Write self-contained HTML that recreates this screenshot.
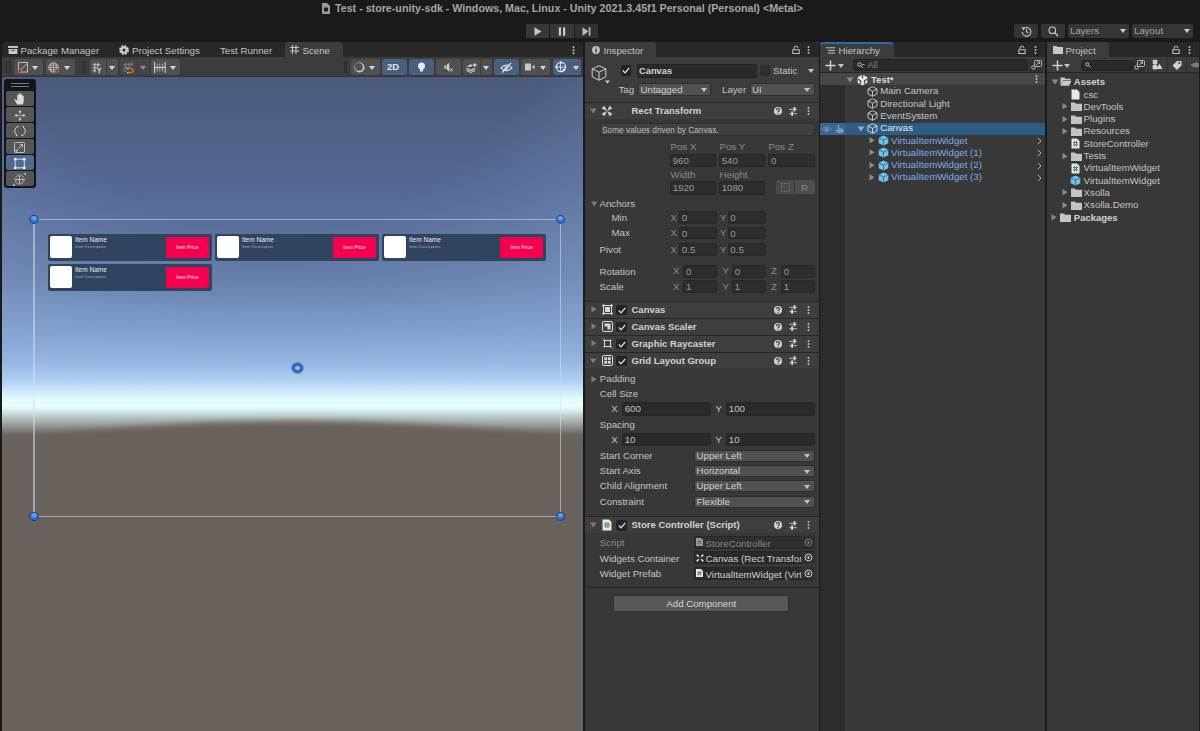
<!DOCTYPE html>
<html><head><meta charset="utf-8">
<style>
*{box-sizing:border-box;margin:0;padding:0}
html,body{width:1200px;height:731px;overflow:hidden;background:#1a1a1a;font-family:"Liberation Sans",sans-serif;color:#c4c4c4}
.a{position:absolute}
.t{position:absolute;white-space:nowrap;font-size:9.7px;line-height:12px;height:12px}
.b{font-weight:bold}
svg{position:absolute;overflow:visible}
.fld{position:absolute;background:#2a2a2a;border:1px solid #232323;border-radius:2px}
.pop{position:absolute;background:#515151;border:1px solid #2e2e2e;border-radius:2px}
.arr{position:absolute;width:0;height:0;border-left:3.5px solid transparent;border-right:3.5px solid transparent;border-top:4px solid #c4c4c4}
.hdr{position:absolute;left:587px;width:232px;height:16px;background:#3e3e3e;border-top:1px solid #262626}
.chk{position:absolute;width:11px;height:11px;background:#232323;border-radius:2px}
</style></head><body>

<!-- title -->
<div class="t b" style="left:335px;top:2px;font-size:10.7px;color:#a6a6a6">Test - store-unity-sdk - Windows, Mac, Linux - Unity 2021.3.45f1 Personal (Personal) &lt;Metal&gt;</div>
<svg style="left:321px;top:2px" width="10" height="13" viewBox="0 0 10 13"><path d="M1 1h5l3 3v8H1z" fill="#9a9a9a"/><circle cx="5" cy="7.5" r="2.2" fill="#1a1a1a"/></svg>

<!-- play buttons -->
<div class="a" style="left:526px;top:24px;width:23px;height:14px;background:#383838"></div>
<div class="a" style="left:550px;top:24px;width:24px;height:14px;background:#383838"></div>
<div class="a" style="left:575px;top:24px;width:23px;height:14px;background:#313131"></div>
<svg style="left:533.5px;top:26.5px" width="9" height="9"><path d="M0.5 0.3L7.5 4.5L0.5 8.7z" fill="#c8c8c8"/></svg>
<svg style="left:558px;top:26.5px" width="8" height="9"><rect x="0.8" y="0.3" width="2.2" height="8.4" fill="#c8c8c8"/><rect x="5" y="0.3" width="2.2" height="8.4" fill="#c8c8c8"/></svg>
<svg style="left:582px;top:26.5px" width="9" height="9"><path d="M0.5 0.3L6.5 4.5L0.5 8.7z" fill="#bcbcbc"/><rect x="6.8" y="0.3" width="1.6" height="8.4" fill="#bcbcbc"/></svg>

<!-- right toolbar -->
<div class="a" style="left:1014px;top:24px;width:24px;height:14px;background:#353535;border-radius:2px"></div>
<div class="a" style="left:1041px;top:24px;width:24px;height:14px;background:#353535;border-radius:2px"></div>
<div class="a" style="left:1068px;top:24px;width:61px;height:14px;background:#353535;border-radius:2px"></div>
<div class="a" style="left:1132px;top:24px;width:61px;height:14px;background:#353535;border-radius:2px"></div>
<svg style="left:1020.5px;top:25.5px" width="11" height="11" viewBox="0 0 11 11"><path d="M2.2 3.2A4.3 4.3 0 1 1 1.3 6" fill="none" stroke="#c8c8c8" stroke-width="1.1"/><path d="M0.3 1.6L3.6 1.2L3 4.5z" fill="#c8c8c8"/><path d="M5.5 3.2v2.6l1.8 1.2" fill="none" stroke="#c8c8c8" stroke-width="1.1"/></svg>
<svg style="left:1047.5px;top:25.5px" width="11" height="11" viewBox="0 0 11 11"><circle cx="4.3" cy="4.3" r="3.3" fill="none" stroke="#c8c8c8" stroke-width="1.1"/><path d="M6.7 6.7L10 10" stroke="#c8c8c8" stroke-width="1.4"/></svg>
<div class="t" style="left:1070px;top:25px;color:#a8a8a8">Layers</div>
<div class="t" style="left:1134px;top:25px;color:#a8a8a8">Layout</div>
<div class="arr" style="left:1120px;top:29px;border-top-color:#d0d0d0"></div>
<div class="arr" style="left:1184px;top:29px;border-top-color:#d0d0d0"></div>


<!-- ============ SCENE PANEL ============ -->
<div class="a" style="left:2px;top:42px;width:582px;height:15px;background:#282828;border-radius:4px 4px 0 0"></div>
<div class="a" style="left:285px;top:42px;width:58px;height:15px;background:#3c3c3c;border-radius:3px 3px 0 0"></div>
<svg style="left:7.5px;top:46px" width="10" height="8" viewBox="0 0 10 8"><rect x="0" y="0" width="10" height="1.9" fill="#c8c8c8"/><rect x="0.6" y="3" width="8.8" height="5" fill="#c8c8c8"/><rect x="3.2" y="4.2" width="3.6" height="0.9" rx="0.4" fill="#282828"/></svg>
<div class="t" style="left:20.5px;top:44.5px;color:#c4c4c4">Package Manager</div>
<svg style="left:118.8px;top:45.2px" width="10" height="10" viewBox="0 0 10 10"><circle cx="5" cy="5" r="3.9" fill="none" stroke="#d0d0d0" stroke-width="2" stroke-dasharray="2 1.06"/><circle cx="5" cy="5" r="2.6" fill="none" stroke="#d0d0d0" stroke-width="2"/></svg>
<div class="t" style="left:132px;top:44.5px;color:#c4c4c4">Project Settings</div>
<div class="t" style="left:220px;top:44.5px;color:#c4c4c4">Test Runner</div>
<svg style="left:290px;top:45px" width="9" height="9" viewBox="0 0 9 9"><path d="M2.5 0v9M6 0v9M0 2.5h9M0 6h9" stroke="#c4c4c4" stroke-width="1.1"/></svg>
<div class="t" style="left:302.5px;top:44.5px;color:#c4c4c4">Scene</div>
<svg style="left:572px;top:46px" width="3" height="9"><circle cx="1.5" cy="1.2" r="1" fill="#c4c4c4"/><circle cx="1.5" cy="4.2" r="1" fill="#c4c4c4"/><circle cx="1.5" cy="7.2" r="1" fill="#c4c4c4"/></svg>

<!-- scene toolbar -->
<div class="a" style="left:2px;top:57px;width:582px;height:20px;background:#3c3c3c;border-bottom:1px solid #363636"></div>
<div class="a" style="left:6px;top:61px;width:1px;height:12px;background:#2a2a2a"></div>
<div class="a" style="left:8.5px;top:61px;width:1px;height:12px;background:#2a2a2a"></div>
<div class="a" style="left:81.5px;top:61px;width:1px;height:12px;background:#2a2a2a"></div>
<div class="a" style="left:84px;top:61px;width:1px;height:12px;background:#2a2a2a"></div>
<div class="a" style="left:343.5px;top:61px;width:1px;height:12px;background:#2a2a2a"></div>
<div class="a" style="left:346px;top:61px;width:1px;height:12px;background:#2a2a2a"></div>

<div class="a" style="left:14px;top:59px;width:29px;height:16px;background:#505050;border-radius:2px"></div>
<div class="a" style="left:46px;top:59px;width:29px;height:16px;background:#505050;border-radius:2px"></div>
<div class="a" style="left:89.5px;top:59px;width:16.5px;height:16px;background:#505050;border-radius:2px 0 0 2px"></div>
<div class="a" style="left:106.5px;top:59px;width:11.5px;height:16px;background:#505050;border-radius:0 2px 2px 0"></div>
<div class="a" style="left:120px;top:59px;width:17px;height:16px;background:#464646;border-radius:2px 0 0 2px"></div>
<div class="a" style="left:137.5px;top:59px;width:11px;height:16px;background:#464646;border-radius:0 2px 2px 0"></div>
<div class="a" style="left:151px;top:59px;width:29px;height:16px;background:#505050;border-radius:2px"></div>
<!-- icons -->
<svg style="left:17px;top:62px" width="12" height="11" viewBox="0 0 12 11"><rect x="1.5" y="0.5" width="9" height="9.5" fill="none" stroke="#c8c8c8" stroke-width="0.9"/><path d="M3 8.5L10 1.5" stroke="#c8c8c8" stroke-width="0.9"/><circle cx="2.7" cy="9" r="1.6" fill="#4b4b4b" stroke="#e06030" stroke-width="1"/></svg>
<div class="arr" style="left:32px;top:65.5px;border-top-color:#d8d8d8"></div>
<svg style="left:48px;top:62px" width="12" height="11" viewBox="0 0 12 11"><circle cx="5.5" cy="5.5" r="4.7" fill="none" stroke="#c8c8c8" stroke-width="0.9"/><path d="M5.5 0.8v9.4M0.8 5.5h9.4M1.5 3.2h8M1.5 7.8h8M3.3 1.2q-1.5 4.3 0 8.6M7.7 1.2q1.5 4.3 0 8.6" fill="none" stroke="#c8c8c8" stroke-width="0.7"/><circle cx="9" cy="8.6" r="1.6" fill="#4b4b4b" stroke="#e06030" stroke-width="1"/></svg>
<div class="arr" style="left:64px;top:65.5px;border-top-color:#d8d8d8"></div>
<svg style="left:92px;top:61.5px" width="11" height="12" viewBox="0 0 11 12"><path d="M2.8 0.5v10M6 0.5v5M0.5 2.8h8M0.5 5.8h4.5M0.5 8.8h3.5" stroke="#d4d4d4" stroke-width="0.9" fill="none"/><path d="M5.2 5.8l2 2.6 2-2.6M7.2 8.4v3.2" stroke="#dadada" stroke-width="1.1" fill="none"/></svg>
<div class="arr" style="left:109px;top:65.5px;border-top-color:#d8d8d8"></div>
<svg style="left:123px;top:61.5px" width="12" height="12" viewBox="0 0 12 12"><path d="M2.8 0.5v10M6 0.5v5M9 0.5v3M0.5 2.8h10M0.5 5.8h5M0.5 8.8h2" stroke="#b8b8b8" stroke-width="0.8" stroke-dasharray="1.2 0.8" fill="none"/><path d="M5.5 6.6h2.6a2 2 0 0 1 0 4H5.5" stroke="#e0642c" stroke-width="1.5" fill="none"/><rect x="4" y="5.9" width="1.6" height="1.4" fill="#c0c0c0"/><rect x="4" y="9.9" width="1.6" height="1.4" fill="#c0c0c0"/></svg>
<div class="arr" style="left:140px;top:65.5px;border-top-color:#8e8e8e"></div>
<svg style="left:153.5px;top:61.5px" width="12" height="11" viewBox="0 0 12 11"><path d="M0.6 0v11M11.2 0v11M0.6 5.5h10.6" stroke="#d8d8d8" stroke-width="1" fill="none"/><path d="M3.2 1.5v8M5.8 1.5v8M8.5 1.5v8" stroke="#c4c4c4" stroke-width="0.8" fill="none"/></svg>
<div class="arr" style="left:170px;top:65.5px;border-top-color:#d8d8d8"></div>

<!-- right side toolbar -->
<div class="a" style="left:351px;top:59px;width:29px;height:16px;background:#505050;border-radius:2px"></div>
<svg style="left:353.5px;top:61.5px" width="11" height="11" viewBox="0 0 11 11"><circle cx="5.5" cy="5.5" r="5" fill="#d4d4d4"/><circle cx="5.5" cy="5.5" r="4" fill="#505050"/><circle cx="5.5" cy="5.5" r="4.4" fill="#d4d4d4"/><circle cx="4.9" cy="4.9" r="3.9" fill="#505050"/></svg>
<div class="arr" style="left:369px;top:65.5px;border-top-color:#d8d8d8"></div>
<div class="a" style="left:382px;top:59px;width:25px;height:16px;background:#46607e;border-radius:2px"></div>
<div class="t b" style="left:387px;top:61px;color:#e8e8e8;font-size:9.5px">2D</div>
<div class="a" style="left:409px;top:59px;width:25px;height:16px;background:#46607e;border-radius:2px"></div>
<svg style="left:417px;top:61.5px" width="9" height="11" viewBox="0 0 9 11"><circle cx="4.5" cy="4" r="3.5" fill="#e8e8e8"/><rect x="3" y="6" width="3" height="3.5" fill="#e8e8e8"/></svg>
<div class="a" style="left:436px;top:59px;width:25px;height:16px;background:#505050;border-radius:2px"></div>
<svg style="left:444px;top:62px" width="11" height="11" viewBox="0 0 11 11"><rect x="0.3" y="3.3" width="1.3" height="3.6" fill="#cfcfcf"/><path d="M2.4 3.3L5.2 0.8V9.4L2.4 6.9z" fill="#cfcfcf"/><path d="M5.8 6.3l3 3M8.8 6.3l-3 3" stroke="#cfcfcf" stroke-width="1"/></svg>
<div class="a" style="left:463px;top:59px;width:17px;height:16px;background:#505050;border-radius:2px 0 0 2px"></div>
<div class="a" style="left:480.5px;top:59px;width:11.5px;height:16px;background:#505050;border-radius:0 2px 2px 0"></div>
<svg style="left:466px;top:61.5px" width="12" height="11" viewBox="0 0 12 11"><path d="M0.5 5.5l4.3 2.2 4.3-2.2v1.6l-4.3 2.2-4.3-2.2z" fill="#cfcfcf"/><path d="M0.5 7.8l4.3 2.2 4.3-2.2v1.2l-4.3 2-4.3-2z" fill="#cfcfcf"/><path d="M0.5 4.2l4.3-2 2 1-2.2 1.8z" fill="#cfcfcf"/><path d="M8.8 0.5l0.7 1.8 1.8 0.7-1.8 0.7-0.7 1.8-0.7-1.8-1.8-0.7 1.8-0.7z" fill="#e0e0e0"/></svg>
<div class="arr" style="left:482.5px;top:65.5px;border-top-color:#d8d8d8"></div>
<div class="a" style="left:494px;top:59px;width:25px;height:16px;background:#46607e;border-radius:2px"></div>
<svg style="left:500px;top:61.5px" width="13" height="11" viewBox="0 0 13 11"><path d="M1 5.8q5.5-5.5 11 0q-5.5 5.5-11 0z" fill="none" stroke="#e8e8e8" stroke-width="1.1"/><circle cx="6.5" cy="5.8" r="1.6" fill="none" stroke="#e8e8e8" stroke-width="0.9"/><path d="M2.2 10.5L11 1" stroke="#e8e8e8" stroke-width="1.2"/></svg>
<div class="a" style="left:521px;top:59px;width:29px;height:16px;background:#505050;border-radius:2px"></div>
<svg style="left:525px;top:63px" width="11" height="8" viewBox="0 0 11 8"><rect x="0" y="0.5" width="6" height="7" fill="#c8c8c8"/><path d="M7.5 3.5l2-2v5l-2-2z" fill="#c8c8c8"/></svg>
<div class="arr" style="left:540px;top:65.5px;border-top-color:#d8d8d8"></div>
<div class="a" style="left:553px;top:59px;width:16.5px;height:16px;background:#46607e;border-radius:2px 0 0 2px"></div>
<div class="a" style="left:570px;top:59px;width:11px;height:16px;background:#46607e;border-radius:0 2px 2px 0"></div>
<svg style="left:555px;top:61px" width="12" height="12" viewBox="0 0 12 12"><circle cx="6" cy="6" r="4.6" fill="none" stroke="#ececec" stroke-width="1.1"/><path d="M1.4 5.5q4.6 2 9.2 0M6.2 1.4q-2 4.6 0 9.2" fill="none" stroke="#ececec" stroke-width="0.9"/><circle cx="6" cy="1.4" r="1.2" fill="#ececec"/><circle cx="1.4" cy="6" r="1.2" fill="#ececec"/><circle cx="9" cy="8.8" r="1.2" fill="#ececec"/></svg>
<div class="arr" style="left:572.5px;top:65.5px;border-top-color:#d8d8d8"></div>

<!-- scene view -->
<div class="a" style="left:2px;top:77px;width:581.2px;height:654px;overflow:hidden;background:linear-gradient(180deg,#4a5a7b 0px,#546893 110px,#627aa6 200px,#6c86b2 223px,#7d9bc8 253px,#94b4e0 283px,#b0d0f2 303px,#d0ecfc 315px,#e4fcff 323px,#e8ffff 328px,#dcf0f0 333px,#bccccc 339px,#a0a8a8 346px,#848482 352px,#6b6560 358px,#69625c 654px)">
<div class="a" style="left:0;top:0;width:582px;height:320px;background:radial-gradient(ellipse 500px 700px at 270px -350px,rgba(160,190,235,0) 72%,rgba(160,190,235,0.12) 85%,rgba(160,190,235,0.3) 102%);-webkit-mask-image:linear-gradient(180deg,#000 0,#000 230px,transparent 320px)"></div>
<div class="a" style="left:-905px;top:344px;width:2400px;height:1300px;border-radius:50%;background:#69625c;filter:blur(3px)"></div>
</div>
<!-- canvas rect -->
<div class="a" style="left:34px;top:219px;width:527px;height:1.3px;background:rgba(215,222,235,0.55)"></div>
<div class="a" style="left:34px;top:515.8px;width:527px;height:1.3px;background:rgba(215,222,235,0.55)"></div>
<div class="a" style="left:33.4px;top:220px;width:1.3px;height:296px;background:rgba(215,222,235,0.55)"></div>
<div class="a" style="left:560px;top:220px;width:1.3px;height:296px;background:rgba(215,222,235,0.55)"></div>
<div class="a" style="left:30.3px;top:216.1px;width:7.4px;height:7.4px;border-radius:50%;background:radial-gradient(circle at 50% 30%,#7ab8ff 0,#1a6ae8 60%,#2a5ab0 100%);box-shadow:0 0 0 0.9px rgba(30,40,60,0.7)"></div>
<div class="a" style="left:557px;top:216.1px;width:7.4px;height:7.4px;border-radius:50%;background:radial-gradient(circle at 50% 30%,#7ab8ff 0,#1a6ae8 60%,#2a5ab0 100%);box-shadow:0 0 0 0.9px rgba(30,40,60,0.7)"></div>
<div class="a" style="left:30.3px;top:512.7px;width:7.4px;height:7.4px;border-radius:50%;background:radial-gradient(circle at 50% 30%,#7ab8ff 0,#1a6ae8 60%,#2a5ab0 100%);box-shadow:0 0 0 0.9px rgba(30,40,60,0.7)"></div>
<div class="a" style="left:557px;top:512.7px;width:7.4px;height:7.4px;border-radius:50%;background:radial-gradient(circle at 50% 30%,#7ab8ff 0,#1a6ae8 60%,#2a5ab0 100%);box-shadow:0 0 0 0.9px rgba(30,40,60,0.7)"></div>
<div class="a" style="left:292.2px;top:362.6px;width:10.8px;height:10.8px;border-radius:50%;border:3px solid #2a68cc;box-shadow:0 0 0 0.8px rgba(40,60,100,0.5)"></div>

<!-- widgets -->
<div class="a" style="left:48px;top:234px;width:164px;height:27px;background:#30435f;border-radius:2px"></div>
<div class="a" style="left:50px;top:236px;width:22px;height:22px;background:#fff;border-radius:2px"></div>
<div class="a" style="left:75px;top:235.5px;font-size:6.5px;line-height:8px;color:#e8ecf2;white-space:nowrap">Item Name</div>
<div class="a" style="left:75px;top:244px;font-size:4.3px;line-height:6px;color:#9eaabb;white-space:nowrap">Item Description</div>
<div class="a" style="left:166px;top:237px;width:43px;height:21px;background:#f5004f;border-radius:1px"></div>
<div class="a" style="left:166px;top:244px;width:43px;font-size:5px;line-height:7px;color:#ffe0ea;text-align:center;white-space:nowrap">Item Price</div>
<div class="a" style="left:215px;top:234px;width:164px;height:27px;background:#30435f;border-radius:2px"></div>
<div class="a" style="left:217px;top:236px;width:22px;height:22px;background:#fff;border-radius:2px"></div>
<div class="a" style="left:242px;top:235.5px;font-size:6.5px;line-height:8px;color:#e8ecf2;white-space:nowrap">Item Name</div>
<div class="a" style="left:242px;top:244px;font-size:4.3px;line-height:6px;color:#9eaabb;white-space:nowrap">Item Description</div>
<div class="a" style="left:333px;top:237px;width:43px;height:21px;background:#f5004f;border-radius:1px"></div>
<div class="a" style="left:333px;top:244px;width:43px;font-size:5px;line-height:7px;color:#ffe0ea;text-align:center;white-space:nowrap">Item Price</div>
<div class="a" style="left:382px;top:234px;width:164px;height:27px;background:#30435f;border-radius:2px"></div>
<div class="a" style="left:384px;top:236px;width:22px;height:22px;background:#fff;border-radius:2px"></div>
<div class="a" style="left:409px;top:235.5px;font-size:6.5px;line-height:8px;color:#e8ecf2;white-space:nowrap">Item Name</div>
<div class="a" style="left:409px;top:244px;font-size:4.3px;line-height:6px;color:#9eaabb;white-space:nowrap">Item Description</div>
<div class="a" style="left:500px;top:237px;width:43px;height:21px;background:#f5004f;border-radius:1px"></div>
<div class="a" style="left:500px;top:244px;width:43px;font-size:5px;line-height:7px;color:#ffe0ea;text-align:center;white-space:nowrap">Item Price</div>
<div class="a" style="left:48px;top:264px;width:164px;height:27px;background:#30435f;border-radius:2px"></div>
<div class="a" style="left:50px;top:266px;width:22px;height:22px;background:#fff;border-radius:2px"></div>
<div class="a" style="left:75px;top:265.5px;font-size:6.5px;line-height:8px;color:#e8ecf2;white-space:nowrap">Item Name</div>
<div class="a" style="left:75px;top:274px;font-size:4.3px;line-height:6px;color:#9eaabb;white-space:nowrap">Item Description</div>
<div class="a" style="left:166px;top:267px;width:43px;height:21px;background:#f5004f;border-radius:1px"></div>
<div class="a" style="left:166px;top:274px;width:43px;font-size:5px;line-height:7px;color:#ffe0ea;text-align:center;white-space:nowrap">Item Price</div>

<!-- tool palette -->
<div class="a" style="left:3.5px;top:79px;width:32.5px;height:109px;background:#11151c;border-radius:3px"></div>
<div class="a" style="left:11px;top:83px;width:18px;height:1px;background:#7a7e84"></div>
<div class="a" style="left:11px;top:85.5px;width:18px;height:1px;background:#7a7e84"></div>
<div class="a" style="left:5.5px;top:91px;width:28.5px;height:15px;background:#565656;border-radius:2px"></div>
<div class="a" style="left:5.5px;top:107px;width:28.5px;height:15px;background:#565656;border-radius:2px"></div>
<div class="a" style="left:5.5px;top:123px;width:28.5px;height:15px;background:#565656;border-radius:2px"></div>
<div class="a" style="left:5.5px;top:139px;width:28.5px;height:15px;background:#565656;border-radius:2px"></div>
<div class="a" style="left:5.5px;top:155px;width:28.5px;height:15px;background:#4e6a8f;border-radius:2px"></div>
<div class="a" style="left:5.5px;top:171px;width:28.5px;height:15px;background:#565656;border-radius:2px"></div>

<svg style="left:13.5px;top:92.5px" width="12" height="12" viewBox="0 0 12 12"><path d="M3.2 11.5L0.8 7.6q-0.6-1 0.3-1.3q0.7-0.2 1.2 0.5l1 1.3V2.5q0-0.9 0.8-0.9t0.8 0.9v3.8V1.2q0-0.9 0.8-0.9t0.8 0.9v5.1V1.8q0-0.9 0.8-0.9t0.8 0.9v4.5V3.3q0-0.9 0.8-0.9t0.8 0.9v4.9q0 2.2-1.3 3.3z" fill="#dcdcdc"/></svg>
<svg style="left:13.5px;top:108.5px" width="12" height="13" viewBox="0 0 12 13"><path d="M6 1.5v10M1 6.5h10" stroke="#d0d0d0" stroke-width="0.9" fill="none"/><path d="M4.3 3.2L6 1.2L7.7 3.2z M4.3 9.8L6 11.8L7.7 9.8z M2.7 4.8L0.7 6.5L2.7 8.2z M9.3 4.8L11.3 6.5L9.3 8.2z" fill="#d0d0d0"/><rect x="5" y="5.5" width="2" height="2" fill="#565656"/></svg>
<svg style="left:13.5px;top:124.8px" width="12" height="12" viewBox="0 0 12 12"><path d="M5 1.2A4.8 4.8 0 0 0 2.2 9.5M7 10.8A4.8 4.8 0 0 0 9.8 2.5" stroke="#d0d0d0" stroke-width="1" fill="none"/><path d="M8.2 0.6L10.3 1.4L9.7 3.6z M3.8 11.4L1.7 10.6L2.3 8.4z" fill="#d0d0d0"/></svg>
<svg style="left:14px;top:142px" width="11" height="11" viewBox="0 0 11 11"><rect x="0.5" y="0.5" width="10" height="10" rx="0.8" fill="none" stroke="#c8c8c8" stroke-width="0.9"/><rect x="1.5" y="7.6" width="2" height="2" fill="#c8c8c8"/><path d="M3.8 7.2L8.3 2.7M5.6 2.6h2.8v2.8" stroke="#c8c8c8" stroke-width="0.9" fill="none"/></svg>
<svg style="left:14px;top:158px" width="11.5" height="11" viewBox="0 0 11.5 11"><path d="M1.2 2.5v6M10.3 2.5v6M2.5 1.2h6.5M2.5 9.8h6.5" stroke="#e8e8e8" stroke-width="0.9"/><rect x="0" y="0" width="2.5" height="2.5" fill="#f4f4f4"/><rect x="9" y="0" width="2.5" height="2.5" fill="#f4f4f4"/><rect x="0" y="8.5" width="2.5" height="2.5" fill="#f4f4f4"/><rect x="9" y="8.5" width="2.5" height="2.5" fill="#f4f4f4"/></svg>
<svg style="left:13px;top:173px" width="13" height="13" viewBox="0 0 13 13"><circle cx="6.5" cy="6.5" r="4.6" fill="none" stroke="#cfcfcf" stroke-width="0.9" stroke-dasharray="2.4 0.9"/><path d="M6.5 3v7M3 6.5h7" stroke="#cfcfcf" stroke-width="0.8"/><path d="M5.3 3.8L6.5 2.4L7.7 3.8z M5.3 9.2L6.5 10.6L7.7 9.2z M3.8 5.3L2.4 6.5L3.8 7.7z M9.2 5.3L10.6 6.5L9.2 7.7z" fill="#cfcfcf"/><path d="M0 13l2.5-0.3L0.3 10.5z M13 0l-2.5 0.3L12.7 2.5z" fill="#cfcfcf"/></svg>
<!-- scene right border -->
<div class="a" style="left:583.2px;top:42px;width:3px;height:689px;background:#1a1a1a"></div>
<!-- ============ INSPECTOR ============ -->
<div class="a" style="left:585px;top:42px;width:234px;height:689px;background:#383838"></div>
<div class="a" style="left:585px;top:42px;width:234px;height:15px;background:#282828;border-radius:4px 4px 0 0"></div>
<div class="a" style="left:585px;top:42px;width:71px;height:15px;background:#3c3c3c;border-radius:4px 3px 0 0"></div>
<svg style="left:592px;top:45.5px" width="8" height="8" viewBox="0 0 8 8"><circle cx="4" cy="4" r="3.9" fill="#c4c4c4"/><rect x="3.4" y="3.2" width="1.3" height="3.3" fill="#282828"/><circle cx="4" cy="2" r="0.7" fill="#282828"/></svg>
<div class="t" style="left:603.5px;top:44.5px">Inspector</div>
<svg style="left:792px;top:45.5px" width="8" height="8" viewBox="0 0 8 8"><path d="M2 3.5V2.2a2 2 0 0 1 4 0" fill="none" stroke="#c4c4c4" stroke-width="1"/><rect x="0.8" y="3.8" width="6.4" height="3.7" fill="none" stroke="#c4c4c4" stroke-width="1"/></svg>
<svg style="left:807px;top:45.5px" width="3" height="9"><circle cx="1.5" cy="1" r="0.95" fill="#c4c4c4"/><circle cx="1.5" cy="4" r="0.95" fill="#c4c4c4"/><circle cx="1.5" cy="7" r="0.95" fill="#c4c4c4"/></svg>
<div class="a" style="left:585px;top:57px;width:234px;height:45px;background:#3c3c3c"></div>
<svg style="left:590.5px;top:64.5px" width="19" height="19" viewBox="0 0 19 19"><path d="M8 0.8L14.8 3.8V11.8L8 15.2L1.2 11.8V3.8z M1.2 3.8L8 7.2L14.8 3.8 M8 7.2V15.2" fill="none" stroke="#d0d0d0" stroke-width="1" stroke-linejoin="round"/><path d="M14 15.6h5l-2.5 3z" fill="#d0d0d0"/></svg>
<div class="chk" style="left:620.5px;top:65px;width:10.5px;height:11px"></div>
<svg style="left:622px;top:67px" width="8" height="7" viewBox="0 0 8 7"><path d="M0.8 3.5L3 5.8L7.2 1" fill="none" stroke="#e4e4e4" stroke-width="1.2"/></svg>
<div class="fld" style="left:636.5px;top:64px;width:120px;height:14px;background:#2a2a2a;border-color:#242424"></div>
<div class="t b" style="left:639px;top:65px;color:#d6d6d6;font-size:9.3px">Canvas</div>
<div class="chk" style="left:759.5px;top:65px;width:10.5px;height:11px;background:#2f2f2f;border:1px solid #2a2a2a"></div>
<div class="t" style="left:773px;top:65px">Static</div>
<div class="arr" style="left:807.5px;top:69px"></div>
<div class="t" style="left:618.5px;top:83.5px;color:#c4c4c4">Tag</div>
<div class="pop" style="left:638px;top:83px;width:73px;height:12.5px"></div>
<div class="t" style="left:640.5px;top:83.5px;color:#d0d0d0">Untagged</div>
<div class="arr" style="left:700.5px;top:88px"></div>
<div class="t" style="left:722px;top:83.5px;color:#c4c4c4">Layer</div>
<div class="pop" style="left:750px;top:83px;width:65px;height:12.5px"></div>
<div class="t" style="left:752px;top:83.5px;color:#d0d0d0">UI</div>
<div class="arr" style="left:804px;top:88px"></div>
<div class="hdr" style="top:102px;left:585px;width:234px;height:17px"></div>
<svg style="left:590px;top:108px" width="7" height="6"><path d="M0 0.5h6.5L3.25 5.5z" fill="#7c7c7c"/></svg>
<svg style="left:601.5px;top:105.8px" width="10" height="10" viewBox="0 0 10 10"><path d="M0 2.3L2.3 0L4.4 4.4z M10 2.3L7.7 0L5.6 4.4z M0 7.7L2.3 10L4.4 5.6z M10 7.7L7.7 10L5.6 5.6z" fill="#d4d4d4" stroke="#d4d4d4" stroke-width="0.5" stroke-linejoin="round"/></svg>
<div class="t b" style="left:631.5px;top:105px;color:#d2d2d2;font-size:9.5px">Rect Transform</div>
<svg style="left:773.5px;top:107px" width="8" height="8" viewBox="0 0 8 8"><circle cx="4" cy="4" r="4" fill="#d0d0d0"/><path d="M2.6 3.1q0-1.7 1.4-1.7t1.4 1.5q0 0.8-0.7 1.1q-0.6 0.3-0.6 1.1" fill="none" stroke="#2e2e2e" stroke-width="1.05"/><circle cx="4.1" cy="6.5" r="0.65" fill="#2e2e2e"/></svg>
<svg style="left:788.5px;top:106.5px" width="9" height="9" viewBox="0 0 9 9"><path d="M0.3 2.3h7.5M0.3 6.6h7.5" stroke="#a8a8a8" stroke-width="1.3"/><rect x="4.6" y="0" width="1.8" height="4.6" rx="0.6" fill="#d8d8d8"/><rect x="2.2" y="4.3" width="1.8" height="4.6" rx="0.6" fill="#d8d8d8"/></svg>
<svg style="left:807px;top:107px" width="3" height="9"><circle cx="1.5" cy="1" r="0.95" fill="#c4c4c4"/><circle cx="1.5" cy="4" r="0.95" fill="#c4c4c4"/><circle cx="1.5" cy="7" r="0.95" fill="#c4c4c4"/></svg>
<div class="a" style="left:599.5px;top:123px;width:215.5px;height:13px;background:#404040;border:1px solid #2f2f2f;border-radius:2px"></div>
<div class="t" style="left:602px;top:123.5px;font-size:8.3px;color:#bcbcbc">Some values driven by Canvas.</div>
<div class="t" style="left:670.5px;top:141px;color:#8a8a8a">Pos X</div>
<div class="t" style="left:719.5px;top:141px;color:#8a8a8a">Pos Y</div>
<div class="t" style="left:768.5px;top:141px;color:#8a8a8a">Pos Z</div>
<div class="fld" style="left:670.2px;top:153.5px;width:46px;height:13.2px;background:#2d2d2d;border-color:#262626"></div>
<div class="t" style="left:672.7px;top:154.5px;color:#9a9a9a">960</div>
<div class="fld" style="left:719.2px;top:153.5px;width:46px;height:13.2px;background:#2d2d2d;border-color:#262626"></div>
<div class="t" style="left:721.7px;top:154.5px;color:#9a9a9a">540</div>
<div class="fld" style="left:768.4px;top:153.5px;width:46.5px;height:13.2px;background:#2d2d2d;border-color:#262626"></div>
<div class="t" style="left:770.9px;top:154.5px;color:#9a9a9a">0</div>
<div class="t" style="left:670.5px;top:169px;color:#8a8a8a">Width</div>
<div class="t" style="left:719.5px;top:169px;color:#8a8a8a">Height</div>
<div class="fld" style="left:670.2px;top:181.3px;width:46px;height:13.4px;background:#2d2d2d;border-color:#262626"></div>
<div class="t" style="left:672.7px;top:182.3px;color:#9a9a9a">1920</div>
<div class="fld" style="left:719.2px;top:181.3px;width:46px;height:13.4px;background:#2d2d2d;border-color:#262626"></div>
<div class="t" style="left:721.7px;top:182.3px;color:#9a9a9a">1080</div>
<div class="a" style="left:776.2px;top:180.3px;width:18px;height:13.7px;background:#4a4a4a;border-radius:2px 0 0 2px"></div>
<div class="a" style="left:795px;top:180.3px;width:20px;height:13.7px;background:#4e4e4e;border-radius:0 2px 2px 0"></div>
<svg style="left:780.5px;top:183px" width="9" height="9" viewBox="0 0 9 9"><rect x="0.5" y="0.5" width="8" height="8" fill="none" stroke="#7c7c7c" stroke-width="1" stroke-dasharray="1.2 1.4"/></svg>
<div class="t" style="left:801px;top:181.5px;color:#8a8a8a">R</div>
<svg style="left:591px;top:201px" width="7" height="6"><path d="M0 0.5h6.5L3.25 5.5z" fill="#7c7c7c"/></svg>
<div class="t" style="left:599.5px;top:197.5px">Anchors</div>
<div class="t" style="left:611.5px;top:212px">Min</div>
<div class="t" style="left:611.5px;top:227px">Max</div>
<div class="t" style="left:599.5px;top:244px">Pivot</div>
<div class="t" style="left:670.5px;top:211.8px;color:#8a8a8a">X</div>
<div class="fld" style="left:679.3px;top:211.0px;width:37.4px;height:12.7px;background:#2d2d2d;border-color:#262626"></div>
<div class="t" style="left:681.8px;top:212.0px;color:#9a9a9a">0</div>
<div class="t" style="left:720px;top:211.8px;color:#8a8a8a">Y</div>
<div class="fld" style="left:727.8px;top:211.0px;width:38.2px;height:12.7px;background:#2d2d2d;border-color:#262626"></div>
<div class="t" style="left:730.3px;top:212.0px;color:#9a9a9a">0</div>
<div class="t" style="left:670.5px;top:227.3px;color:#8a8a8a">X</div>
<div class="fld" style="left:679.3px;top:226.5px;width:37.4px;height:12.7px;background:#2d2d2d;border-color:#262626"></div>
<div class="t" style="left:681.8px;top:227.5px;color:#9a9a9a">0</div>
<div class="t" style="left:720px;top:227.3px;color:#8a8a8a">Y</div>
<div class="fld" style="left:727.8px;top:226.5px;width:38.2px;height:12.7px;background:#2d2d2d;border-color:#262626"></div>
<div class="t" style="left:730.3px;top:227.5px;color:#9a9a9a">0</div>
<div class="t" style="left:670.5px;top:243.8px;color:#8a8a8a">X</div>
<div class="fld" style="left:679.3px;top:243.0px;width:37.4px;height:12.7px;background:#2d2d2d;border-color:#262626"></div>
<div class="t" style="left:681.8px;top:244.0px;color:#9a9a9a">0.5</div>
<div class="t" style="left:720px;top:243.8px;color:#8a8a8a">Y</div>
<div class="fld" style="left:727.8px;top:243.0px;width:38.2px;height:12.7px;background:#2d2d2d;border-color:#262626"></div>
<div class="t" style="left:730.3px;top:244.0px;color:#9a9a9a">0.5</div>
<div class="t" style="left:599.5px;top:265.5px">Rotation</div>
<div class="t" style="left:599.5px;top:281px">Scale</div>
<div class="t" style="left:673px;top:265.3px;color:#8a8a8a">X</div>
<div class="fld" style="left:683.4px;top:264.5px;width:34px;height:13.4px;background:#2d2d2d;border-color:#262626"></div>
<div class="t" style="left:685.9px;top:265.5px;color:#9a9a9a">0</div>
<div class="t" style="left:722.4px;top:265.3px;color:#8a8a8a">Y</div>
<div class="fld" style="left:732.2px;top:264.5px;width:34.3px;height:13.4px;background:#2d2d2d;border-color:#262626"></div>
<div class="t" style="left:734.7px;top:265.5px;color:#9a9a9a">0</div>
<div class="t" style="left:771px;top:265.3px;color:#8a8a8a">Z</div>
<div class="fld" style="left:781.2px;top:264.5px;width:33.5px;height:13.4px;background:#2d2d2d;border-color:#262626"></div>
<div class="t" style="left:783.7px;top:265.5px;color:#9a9a9a">0</div>
<div class="t" style="left:673px;top:280.8px;color:#8a8a8a">X</div>
<div class="fld" style="left:683.4px;top:280px;width:34px;height:13.4px;background:#2d2d2d;border-color:#262626"></div>
<div class="t" style="left:685.9px;top:281px;color:#9a9a9a">1</div>
<div class="t" style="left:722.4px;top:280.8px;color:#8a8a8a">Y</div>
<div class="fld" style="left:732.2px;top:280px;width:34.3px;height:13.4px;background:#2d2d2d;border-color:#262626"></div>
<div class="t" style="left:734.7px;top:281px;color:#9a9a9a">1</div>
<div class="t" style="left:771px;top:280.8px;color:#8a8a8a">Z</div>
<div class="fld" style="left:781.2px;top:280px;width:33.5px;height:13.4px;background:#2d2d2d;border-color:#262626"></div>
<div class="t" style="left:783.7px;top:281px;color:#9a9a9a">1</div>
<div class="hdr" style="top:300.5px;left:585px;width:234px;height:17px"></div>
<svg style="left:591px;top:305.5px" width="6" height="7"><path d="M0.5 0V6.5L5.5 3.25z" fill="#7c7c7c"/></svg>
<svg style="left:601.5px;top:300.5px;margin-top:3.5px" width="11" height="11" viewBox="0 0 11 11"><rect x="1.5" y="1.5" width="8" height="8" fill="none" stroke="#d8d8d8" stroke-width="1"/><rect x="3" y="3" width="5" height="5" fill="#d8d8d8"/><circle cx="1.5" cy="1.5" r="1.2" fill="#d8d8d8"/><circle cx="9.5" cy="1.5" r="1.2" fill="#d8d8d8"/><circle cx="1.5" cy="9.5" r="1.2" fill="#d8d8d8"/><circle cx="9.5" cy="9.5" r="1.2" fill="#d8d8d8"/></svg>
<div class="chk" style="left:616px;top:304.5px;width:10.5px;height:10.5px"></div>
<svg style="left:617.5px;top:306.5px" width="8" height="7" viewBox="0 0 8 7"><path d="M0.8 3.5L3 5.8L7.2 1" fill="none" stroke="#e4e4e4" stroke-width="1.2"/></svg>
<div class="t b" style="left:631.5px;top:303.5px;color:#d2d2d2;font-size:9.5px">Canvas</div>
<svg style="left:773.5px;top:305.5px" width="8" height="8" viewBox="0 0 8 8"><circle cx="4" cy="4" r="4" fill="#d0d0d0"/><path d="M2.6 3.1q0-1.7 1.4-1.7t1.4 1.5q0 0.8-0.7 1.1q-0.6 0.3-0.6 1.1" fill="none" stroke="#2e2e2e" stroke-width="1.05"/><circle cx="4.1" cy="6.5" r="0.65" fill="#2e2e2e"/></svg>
<svg style="left:788.5px;top:305.0px" width="9" height="9" viewBox="0 0 9 9"><path d="M0.3 2.3h7.5M0.3 6.6h7.5" stroke="#a8a8a8" stroke-width="1.3"/><rect x="4.6" y="0" width="1.8" height="4.6" rx="0.6" fill="#d8d8d8"/><rect x="2.2" y="4.3" width="1.8" height="4.6" rx="0.6" fill="#d8d8d8"/></svg>
<svg style="left:807px;top:305.5px" width="3" height="9"><circle cx="1.5" cy="1" r="0.95" fill="#c4c4c4"/><circle cx="1.5" cy="4" r="0.95" fill="#c4c4c4"/><circle cx="1.5" cy="7" r="0.95" fill="#c4c4c4"/></svg>
<div class="hdr" style="top:317.5px;left:585px;width:234px;height:17px"></div>
<svg style="left:591px;top:322.5px" width="6" height="7"><path d="M0.5 0V6.5L5.5 3.25z" fill="#7c7c7c"/></svg>
<svg style="left:601.5px;top:317.5px;margin-top:3.5px" width="11" height="11" viewBox="0 0 11 11"><rect x="0.5" y="0.5" width="10" height="10" rx="1.5" fill="none" stroke="#d8d8d8" stroke-width="1"/><path d="M2.5 2.5h6v6h-3v-3h-3z" fill="#d8d8d8"/></svg>
<div class="chk" style="left:616px;top:321.5px;width:10.5px;height:10.5px"></div>
<svg style="left:617.5px;top:323.5px" width="8" height="7" viewBox="0 0 8 7"><path d="M0.8 3.5L3 5.8L7.2 1" fill="none" stroke="#e4e4e4" stroke-width="1.2"/></svg>
<div class="t b" style="left:631.5px;top:320.5px;color:#d2d2d2;font-size:9.5px">Canvas Scaler</div>
<svg style="left:773.5px;top:322.5px" width="8" height="8" viewBox="0 0 8 8"><circle cx="4" cy="4" r="4" fill="#d0d0d0"/><path d="M2.6 3.1q0-1.7 1.4-1.7t1.4 1.5q0 0.8-0.7 1.1q-0.6 0.3-0.6 1.1" fill="none" stroke="#2e2e2e" stroke-width="1.05"/><circle cx="4.1" cy="6.5" r="0.65" fill="#2e2e2e"/></svg>
<svg style="left:788.5px;top:322.0px" width="9" height="9" viewBox="0 0 9 9"><path d="M0.3 2.3h7.5M0.3 6.6h7.5" stroke="#a8a8a8" stroke-width="1.3"/><rect x="4.6" y="0" width="1.8" height="4.6" rx="0.6" fill="#d8d8d8"/><rect x="2.2" y="4.3" width="1.8" height="4.6" rx="0.6" fill="#d8d8d8"/></svg>
<svg style="left:807px;top:322.5px" width="3" height="9"><circle cx="1.5" cy="1" r="0.95" fill="#c4c4c4"/><circle cx="1.5" cy="4" r="0.95" fill="#c4c4c4"/><circle cx="1.5" cy="7" r="0.95" fill="#c4c4c4"/></svg>
<div class="hdr" style="top:334.5px;left:585px;width:234px;height:17px"></div>
<svg style="left:591px;top:339.5px" width="6" height="7"><path d="M0.5 0V6.5L5.5 3.25z" fill="#7c7c7c"/></svg>
<svg style="left:601.5px;top:334.5px;margin-top:3.5px" width="11" height="11" viewBox="0 0 11 11"><rect x="2.5" y="2.5" width="6" height="6" fill="none" stroke="#d8d8d8" stroke-width="1"/><circle cx="2.5" cy="2.5" r="1" fill="#d8d8d8"/><circle cx="8.5" cy="2.5" r="1" fill="#d8d8d8"/><circle cx="2.5" cy="8.5" r="1" fill="#d8d8d8"/><circle cx="8.5" cy="8.5" r="1" fill="#d8d8d8"/><path d="M0 0L2 2M9 9L11 11" stroke="#5ab8e8" stroke-width="0.8"/></svg>
<div class="chk" style="left:616px;top:338.5px;width:10.5px;height:10.5px"></div>
<svg style="left:617.5px;top:340.5px" width="8" height="7" viewBox="0 0 8 7"><path d="M0.8 3.5L3 5.8L7.2 1" fill="none" stroke="#e4e4e4" stroke-width="1.2"/></svg>
<div class="t b" style="left:631.5px;top:337.5px;color:#d2d2d2;font-size:9.5px">Graphic Raycaster</div>
<svg style="left:773.5px;top:339.5px" width="8" height="8" viewBox="0 0 8 8"><circle cx="4" cy="4" r="4" fill="#d0d0d0"/><path d="M2.6 3.1q0-1.7 1.4-1.7t1.4 1.5q0 0.8-0.7 1.1q-0.6 0.3-0.6 1.1" fill="none" stroke="#2e2e2e" stroke-width="1.05"/><circle cx="4.1" cy="6.5" r="0.65" fill="#2e2e2e"/></svg>
<svg style="left:788.5px;top:339.0px" width="9" height="9" viewBox="0 0 9 9"><path d="M0.3 2.3h7.5M0.3 6.6h7.5" stroke="#a8a8a8" stroke-width="1.3"/><rect x="4.6" y="0" width="1.8" height="4.6" rx="0.6" fill="#d8d8d8"/><rect x="2.2" y="4.3" width="1.8" height="4.6" rx="0.6" fill="#d8d8d8"/></svg>
<svg style="left:807px;top:339.5px" width="3" height="9"><circle cx="1.5" cy="1" r="0.95" fill="#c4c4c4"/><circle cx="1.5" cy="4" r="0.95" fill="#c4c4c4"/><circle cx="1.5" cy="7" r="0.95" fill="#c4c4c4"/></svg>
<div class="hdr" style="top:351.5px;left:585px;width:234px;height:17px"></div>
<svg style="left:590px;top:357.5px" width="7" height="6"><path d="M0 0.5h6.5L3.25 5.5z" fill="#7c7c7c"/></svg>
<svg style="left:601.5px;top:351.5px;margin-top:3.5px" width="11" height="11" viewBox="0 0 11 11"><rect x="0.5" y="0.5" width="10" height="10" rx="1.5" fill="none" stroke="#d8d8d8" stroke-width="1"/><rect x="2.3" y="2.3" width="2.8" height="2.8" fill="#d8d8d8"/><rect x="5.9" y="2.3" width="2.8" height="2.8" fill="#d8d8d8"/><rect x="2.3" y="5.9" width="2.8" height="2.8" fill="#d8d8d8"/><rect x="5.9" y="5.9" width="2.8" height="2.8" fill="#d8d8d8"/></svg>
<div class="chk" style="left:616px;top:355.5px;width:10.5px;height:10.5px"></div>
<svg style="left:617.5px;top:357.5px" width="8" height="7" viewBox="0 0 8 7"><path d="M0.8 3.5L3 5.8L7.2 1" fill="none" stroke="#e4e4e4" stroke-width="1.2"/></svg>
<div class="t b" style="left:631.5px;top:354.5px;color:#d2d2d2;font-size:9.5px">Grid Layout Group</div>
<svg style="left:773.5px;top:356.5px" width="8" height="8" viewBox="0 0 8 8"><circle cx="4" cy="4" r="4" fill="#d0d0d0"/><path d="M2.6 3.1q0-1.7 1.4-1.7t1.4 1.5q0 0.8-0.7 1.1q-0.6 0.3-0.6 1.1" fill="none" stroke="#2e2e2e" stroke-width="1.05"/><circle cx="4.1" cy="6.5" r="0.65" fill="#2e2e2e"/></svg>
<svg style="left:788.5px;top:356.0px" width="9" height="9" viewBox="0 0 9 9"><path d="M0.3 2.3h7.5M0.3 6.6h7.5" stroke="#a8a8a8" stroke-width="1.3"/><rect x="4.6" y="0" width="1.8" height="4.6" rx="0.6" fill="#d8d8d8"/><rect x="2.2" y="4.3" width="1.8" height="4.6" rx="0.6" fill="#d8d8d8"/></svg>
<svg style="left:807px;top:356.5px" width="3" height="9"><circle cx="1.5" cy="1" r="0.95" fill="#c4c4c4"/><circle cx="1.5" cy="4" r="0.95" fill="#c4c4c4"/><circle cx="1.5" cy="7" r="0.95" fill="#c4c4c4"/></svg>
<div class="a" style="left:585px;top:368px;width:234px;height:1px;background:#383838"></div>
<svg style="left:591px;top:375.5px" width="6" height="7"><path d="M0.5 0V6.5L5.5 3.25z" fill="#7c7c7c"/></svg>
<div class="t" style="left:599.8px;top:373px">Padding</div>
<div class="t" style="left:599.8px;top:388px">Cell Size</div>
<div class="t" style="left:611.3px;top:403px">X</div>
<div class="fld" style="left:622.2px;top:402.2px;width:88.6px;height:13.4px;background:#2a2a2a;border-color:#262626"></div>
<div class="t" style="left:624.7px;top:403.2px;color:#c4c4c4">600</div>
<div class="t" style="left:715.5px;top:403px">Y</div>
<div class="fld" style="left:726.3px;top:402.2px;width:88.4px;height:13.4px;background:#2a2a2a;border-color:#262626"></div>
<div class="t" style="left:728.8px;top:403.2px;color:#c4c4c4">100</div>
<div class="t" style="left:599.8px;top:419px">Spacing</div>
<div class="t" style="left:611.3px;top:434px">X</div>
<div class="fld" style="left:622.2px;top:433.3px;width:88.6px;height:12.9px;background:#2a2a2a;border-color:#262626"></div>
<div class="t" style="left:624.7px;top:434.3px;color:#c4c4c4">10</div>
<div class="t" style="left:715.5px;top:434px">Y</div>
<div class="fld" style="left:726.3px;top:433.3px;width:88.4px;height:12.9px;background:#2a2a2a;border-color:#262626"></div>
<div class="t" style="left:728.8px;top:434.3px;color:#c4c4c4">10</div>
<div class="t" style="left:599.8px;top:449.5px">Start Corner</div>
<div class="pop" style="left:694px;top:449.5px;width:120.7px;height:12px"></div>
<div class="t" style="left:696.5px;top:449.5px;color:#d0d0d0">Upper Left</div>
<div class="arr" style="left:803.5px;top:454.0px"></div>
<div class="t" style="left:599.8px;top:465px">Start Axis</div>
<div class="pop" style="left:694px;top:465px;width:120.7px;height:12px"></div>
<div class="t" style="left:696.5px;top:465px;color:#d0d0d0">Horizontal</div>
<div class="arr" style="left:803.5px;top:469.5px"></div>
<div class="t" style="left:599.8px;top:480.3px">Child Alignment</div>
<div class="pop" style="left:694px;top:480.3px;width:120.7px;height:12px"></div>
<div class="t" style="left:696.5px;top:480.3px;color:#d0d0d0">Upper Left</div>
<div class="arr" style="left:803.5px;top:484.8px"></div>
<div class="t" style="left:599.8px;top:495.8px">Constraint</div>
<div class="pop" style="left:694px;top:495.8px;width:120.7px;height:12px"></div>
<div class="t" style="left:696.5px;top:495.8px;color:#d0d0d0">Flexible</div>
<div class="arr" style="left:803.5px;top:500.3px"></div>
<div class="hdr" style="top:516px;left:585px;width:234px;height:17px"></div>
<svg style="left:590px;top:522px" width="7" height="6"><path d="M0 0.5h6.5L3.25 5.5z" fill="#7c7c7c"/></svg>
<svg style="left:601.5px;top:516px;margin-top:3px" width="10" height="12" viewBox="0 0 10 12"><path d="M0.5 0.5h6.5l2.5 2.5v8.5h-9z" fill="#e8e8e8"/><path d="M3.8 3v6M6 3v6M2.2 5h5.5M2.2 7h5.5" stroke="#3c8a3c" stroke-width="0.9"/></svg>
<div class="chk" style="left:616px;top:520px;width:10.5px;height:10.5px"></div>
<svg style="left:617.5px;top:522px" width="8" height="7" viewBox="0 0 8 7"><path d="M0.8 3.5L3 5.8L7.2 1" fill="none" stroke="#e4e4e4" stroke-width="1.2"/></svg>
<div class="t b" style="left:631.5px;top:519px;color:#d2d2d2;font-size:9.5px">Store Controller (Script)</div>
<svg style="left:773.5px;top:521px" width="8" height="8" viewBox="0 0 8 8"><circle cx="4" cy="4" r="4" fill="#d0d0d0"/><path d="M2.6 3.1q0-1.7 1.4-1.7t1.4 1.5q0 0.8-0.7 1.1q-0.6 0.3-0.6 1.1" fill="none" stroke="#2e2e2e" stroke-width="1.05"/><circle cx="4.1" cy="6.5" r="0.65" fill="#2e2e2e"/></svg>
<svg style="left:788.5px;top:520.5px" width="9" height="9" viewBox="0 0 9 9"><path d="M0.3 2.3h7.5M0.3 6.6h7.5" stroke="#a8a8a8" stroke-width="1.3"/><rect x="4.6" y="0" width="1.8" height="4.6" rx="0.6" fill="#d8d8d8"/><rect x="2.2" y="4.3" width="1.8" height="4.6" rx="0.6" fill="#d8d8d8"/></svg>
<svg style="left:807px;top:521px" width="3" height="9"><circle cx="1.5" cy="1" r="0.95" fill="#c4c4c4"/><circle cx="1.5" cy="4" r="0.95" fill="#c4c4c4"/><circle cx="1.5" cy="7" r="0.95" fill="#c4c4c4"/></svg>
<div class="t" style="left:599.8px;top:536.5px;color:#8a8a8a">Script</div>
<div class="t" style="left:599.8px;top:552.5px">Widgets Container</div>
<div class="t" style="left:599.8px;top:567.5px">Widget Prefab</div>
<div class="fld" style="left:693.5px;top:535.5px;width:121.5px;height:13px;background:#2f2f2f;border-color:#262626;overflow:hidden"></div>
<svg style="left:696px;top:538px" width="7" height="8" viewBox="0 0 7 8"><path d="M0 0h5l2 2v6H0z" fill="#9a9a9a"/><path d="M2.7 2v4.5M4.3 2v4.5M1.3 3.5h4.4M1.3 5h4.4" stroke="#3c8a3c" stroke-width="0.7"/></svg>
<div class="a" style="left:705.5px;top:537.5px;width:95px;height:12px;overflow:hidden"><div class="t" style="left:0;top:0;color:#888888">StoreController</div></div>
<div class="a" style="left:801px;top:536px;width:13.5px;height:12px;background:#2f2f2f;border-radius:0 2px 2px 0"></div>
<svg style="left:803.5px;top:537.5px" width="9" height="9" viewBox="0 0 9 9"><circle cx="4.5" cy="4.5" r="3.4" fill="none" stroke="#7a7a7a" stroke-width="1"/><circle cx="4.5" cy="4.5" r="1.2" fill="#7a7a7a"/></svg>
<div class="fld" style="left:693.5px;top:551px;width:121.5px;height:13px;background:#2a2a2a;border-color:#262626;overflow:hidden"></div>
<svg style="left:696px;top:553.5px" width="8" height="8" viewBox="0 0 8 8"><path d="M0 1.8L1.8 0L3.5 3.5z M8 1.8L6.2 0L4.5 3.5z M0 6.2L1.8 8L3.5 4.5z M8 6.2L6.2 8L4.5 4.5z" fill="#e0e0e0"/></svg>
<div class="a" style="left:705.5px;top:553px;width:95px;height:12px;overflow:hidden"><div class="t" style="left:0;top:0;color:#d0d0d0">Canvas (Rect Transfor</div></div>
<div class="a" style="left:801px;top:551.5px;width:13.5px;height:12px;background:#333333;border-radius:0 2px 2px 0"></div>
<svg style="left:803.5px;top:553px" width="9" height="9" viewBox="0 0 9 9"><circle cx="4.5" cy="4.5" r="3.4" fill="none" stroke="#d0d0d0" stroke-width="1"/><circle cx="4.5" cy="4.5" r="1.2" fill="#d0d0d0"/></svg>
<div class="fld" style="left:693.5px;top:566.5px;width:121.5px;height:13px;background:#2a2a2a;border-color:#262626;overflow:hidden"></div>
<svg style="left:696px;top:569px" width="7" height="8" viewBox="0 0 7 8"><path d="M0 0h5l2 2v6H0z" fill="#e8e8e8"/><path d="M2.7 2v4.5M4.3 2v4.5M1.3 3.5h4.4M1.3 5h4.4" stroke="#3c8a3c" stroke-width="0.7"/></svg>
<div class="a" style="left:705.5px;top:568.5px;width:95px;height:12px;overflow:hidden"><div class="t" style="left:0;top:0;color:#d0d0d0">VirtualItemWidget (Virt</div></div>
<div class="a" style="left:801px;top:567px;width:13.5px;height:12px;background:#333333;border-radius:0 2px 2px 0"></div>
<svg style="left:803.5px;top:568.5px" width="9" height="9" viewBox="0 0 9 9"><circle cx="4.5" cy="4.5" r="3.4" fill="none" stroke="#d0d0d0" stroke-width="1"/><circle cx="4.5" cy="4.5" r="1.2" fill="#d0d0d0"/></svg>
<div class="a" style="left:585px;top:586.5px;width:234px;height:1px;background:#262626"></div>
<div class="a" style="left:613.3px;top:595.2px;width:176px;height:17px;background:#585858;border:1px solid #303030;border-radius:2px"></div>
<div class="t" style="left:613.3px;top:597.5px;width:176px;text-align:center;color:#d6d6d6">Add Component</div>
<div class="a" style="left:819px;top:42px;width:1.5px;height:689px;background:#1a1a1a"></div>
<!-- ============ HIERARCHY ============ -->
<div class="a" style="left:820px;top:42px;width:225px;height:689px;background:#383838"></div>
<div class="a" style="left:820px;top:42px;width:225px;height:15px;background:#282828;border-radius:4px 4px 0 0"></div>
<div class="a" style="left:820px;top:42px;width:74px;height:15px;background:#3c3c3c;border-radius:4px 4px 0 0;border-top:2px solid #2f6aa8"></div>
<svg style="left:826px;top:46.5px" width="9" height="7" viewBox="0 0 9 7"><circle cx="0.8" cy="0.8" r="0.8" fill="#c4c4c4"/><path d="M2 0.8h7M2 3.4h7M2 6h7" stroke="#c4c4c4" stroke-width="1"/></svg>
<div class="t" style="left:838.5px;top:44.5px">Hierarchy</div>
<svg style="left:1018px;top:45.5px" width="8" height="8" viewBox="0 0 8 8"><path d="M2 3.5V2.2a2 2 0 0 1 4 0" fill="none" stroke="#c4c4c4" stroke-width="1"/><rect x="0.8" y="3.8" width="6.4" height="3.7" fill="none" stroke="#c4c4c4" stroke-width="1"/></svg>
<svg style="left:1034px;top:45.5px" width="3" height="9"><circle cx="1.5" cy="1" r="0.95" fill="#c4c4c4"/><circle cx="1.5" cy="4" r="0.95" fill="#c4c4c4"/><circle cx="1.5" cy="7" r="0.95" fill="#c4c4c4"/></svg>
<div class="a" style="left:820px;top:57px;width:225px;height:15.5px;background:#3c3c3c;border-bottom:1px solid #262626"></div>
<svg style="left:825px;top:59.5px" width="11" height="11" viewBox="0 0 11 11"><path d="M5.5 0.5v10M0.5 5.5h10" stroke="#d4d4d4" stroke-width="1.5"/></svg>
<div class="arr" style="left:837.5px;top:64px"></div>
<div class="a" style="left:853.3px;top:59.3px;width:175px;height:11.5px;background:#2a2a2a;border:1px solid #232323;border-radius:3px"></div>
<svg style="left:856.5px;top:61.5px" width="8" height="7" viewBox="0 0 8 7"><circle cx="2.5" cy="2.5" r="1.8" fill="none" stroke="#b8b8b8" stroke-width="1"/><path d="M3.8 3.8L6 6M5.5 2.5h2" stroke="#b8b8b8" stroke-width="1"/></svg>
<div class="t" style="left:867.5px;top:59.5px;color:#7e7e7e;font-size:9px;line-height:11px">All</div>
<div class="a" style="left:1029px;top:58.5px;width:13.5px;height:13px;background:#303030;border-radius:0 3px 3px 0"></div>
<svg style="left:1030.5px;top:60px" width="11" height="10" viewBox="0 0 11 10"><rect x="3.5" y="0.5" width="7" height="6" rx="1" fill="none" stroke="#c8c8c8" stroke-width="0.9"/><circle cx="2.5" cy="7.5" r="1.8" fill="none" stroke="#c8c8c8" stroke-width="0.9"/><path d="M5 5l3.5-3M6.5 2h2v2" stroke="#c8c8c8" stroke-width="0.9" fill="none"/></svg>
<div class="a" style="left:820px;top:85px;width:25px;height:646px;background:#2c2c2c"></div>
<div class="a" style="left:820px;top:73.2px;width:225px;height:11.8px;background:#474747"></div>
<svg style="left:845.5px;top:76.5px" width="8" height="6"><path d="M0.5 0.5h7L4 5.5z" fill="#8a8a8a"/></svg>
<svg style="left:856.5px;top:73.5px" width="11" height="12" viewBox="0 0 11 12"><path d="M5.5 0.5L10.3 3.2V8.8L5.5 11.5L0.7 8.8V3.2z" fill="#e8e8e8"/><path d="M5.5 0v4.2M1.2 5.2l2.6 1.8M9.8 5.2l-2.6 1.8M3.5 7.2v2.5M7.5 7.2v2.5" stroke="#474747" stroke-width="1.3"/></svg>
<div class="t b" style="left:871px;top:73.5px;color:#dcdcdc;font-size:9.5px">Test*</div>
<svg style="left:1034.5px;top:74.5px" width="3" height="9"><circle cx="1.5" cy="1" r="0.95" fill="#c4c4c4"/><circle cx="1.5" cy="4" r="0.95" fill="#c4c4c4"/><circle cx="1.5" cy="7" r="0.95" fill="#c4c4c4"/></svg>
<div class="a" style="left:820px;top:122.5px;width:225px;height:12.2px;background:#2c5d87"></div>
<div class="a" style="left:820px;top:122.5px;width:25px;height:12.2px;background:#3a6592"></div>
<svg style="left:866.5px;top:85.9px" width="11" height="11" viewBox="0 0 11 11"><path d="M5.5 0.7L10 3V8L5.5 10.3L1 8V3z M1 3L5.5 5.3L10 3 M5.5 5.3V10.3" fill="none" stroke="#cfcfcf" stroke-width="0.9" stroke-linejoin="round"/></svg>
<div class="t" style="left:880.2px;top:85.4px">Main Camera</div>
<svg style="left:866.5px;top:98.2px" width="11" height="11" viewBox="0 0 11 11"><path d="M5.5 0.7L10 3V8L5.5 10.3L1 8V3z M1 3L5.5 5.3L10 3 M5.5 5.3V10.3" fill="none" stroke="#cfcfcf" stroke-width="0.9" stroke-linejoin="round"/></svg>
<div class="t" style="left:880.2px;top:97.7px">Directional Light</div>
<svg style="left:866.5px;top:110.4px" width="11" height="11" viewBox="0 0 11 11"><path d="M5.5 0.7L10 3V8L5.5 10.3L1 8V3z M1 3L5.5 5.3L10 3 M5.5 5.3V10.3" fill="none" stroke="#cfcfcf" stroke-width="0.9" stroke-linejoin="round"/></svg>
<div class="t" style="left:880.2px;top:109.9px">EventSystem</div>
<svg style="left:857px;top:125.5px" width="8" height="6"><path d="M0.5 0.5h7L4 5.5z" fill="#9aa8b8"/></svg>
<svg style="left:866.5px;top:122.7px" width="11" height="11" viewBox="0 0 11 11"><path d="M5.5 0.7L10 3V8L5.5 10.3L1 8V3z M1 3L5.5 5.3L10 3 M5.5 5.3V10.3" fill="none" stroke="#e0e0e0" stroke-width="0.9" stroke-linejoin="round"/></svg>
<div class="t" style="left:880.2px;top:122.2px;color:#e8e8e8">Canvas</div>
<svg style="left:821px;top:124.5px" width="11" height="8" viewBox="0 0 11 8"><path d="M0.6 4q4.9-4.6 9.8 0q-4.9 4.6-9.8 0z" fill="none" stroke="#6f8db4" stroke-width="0.9"/><path d="M3.8 2.4h3.4v2a1.7 1.7 0 0 1-3.4 0z" fill="#6f8db4"/></svg>
<svg style="left:834.5px;top:123.5px" width="9" height="10" viewBox="0 0 9 10"><path d="M2 9L0.5 5.5l1.2-0.3 1 1.3V1q0-0.8 0.8-0.8T4.3 1v3l3.5 0.8q0.8 0.3 0.8 1L8 9z" fill="#7a98b8"/></svg>
<svg style="left:869px;top:137.2px" width="6" height="7"><path d="M0.5 0V6.5L5.5 3.25z" fill="#8a8a8a"/></svg>
<svg style="left:877.5px;top:135.2px" width="11" height="11" viewBox="0 0 11 11"><path d="M5.5 0.5L10.3 2.8V8.2L5.5 10.5L0.7 8.2V2.8z" fill="#6cc4ec"/><path d="M0.7 2.8L5.5 5.1L10.3 2.8M5.5 5.1V10.5" fill="none" stroke="#2e4a5e" stroke-width="0.7"/></svg>
<div class="t" style="left:891.1px;top:134.7px;color:#7cacf0">VirtualItemWidget</div>
<svg style="left:1037px;top:137.2px" width="5" height="8" viewBox="0 0 5 8"><path d="M0.8 0.8L4 4L0.8 7.2" fill="none" stroke="#b0b0b0" stroke-width="1"/></svg>
<svg style="left:869px;top:149.4px" width="6" height="7"><path d="M0.5 0V6.5L5.5 3.25z" fill="#8a8a8a"/></svg>
<svg style="left:877.5px;top:147.4px" width="11" height="11" viewBox="0 0 11 11"><path d="M5.5 0.5L10.3 2.8V8.2L5.5 10.5L0.7 8.2V2.8z" fill="#6cc4ec"/><path d="M0.7 2.8L5.5 5.1L10.3 2.8M5.5 5.1V10.5" fill="none" stroke="#2e4a5e" stroke-width="0.7"/></svg>
<div class="t" style="left:891.1px;top:146.9px;color:#7cacf0">VirtualItemWidget (1)</div>
<svg style="left:1037px;top:149.4px" width="5" height="8" viewBox="0 0 5 8"><path d="M0.8 0.8L4 4L0.8 7.2" fill="none" stroke="#b0b0b0" stroke-width="1"/></svg>
<svg style="left:869px;top:161.7px" width="6" height="7"><path d="M0.5 0V6.5L5.5 3.25z" fill="#8a8a8a"/></svg>
<svg style="left:877.5px;top:159.7px" width="11" height="11" viewBox="0 0 11 11"><path d="M5.5 0.5L10.3 2.8V8.2L5.5 10.5L0.7 8.2V2.8z" fill="#6cc4ec"/><path d="M0.7 2.8L5.5 5.1L10.3 2.8M5.5 5.1V10.5" fill="none" stroke="#2e4a5e" stroke-width="0.7"/></svg>
<div class="t" style="left:891.1px;top:159.2px;color:#7cacf0">VirtualItemWidget (2)</div>
<svg style="left:1037px;top:161.7px" width="5" height="8" viewBox="0 0 5 8"><path d="M0.8 0.8L4 4L0.8 7.2" fill="none" stroke="#b0b0b0" stroke-width="1"/></svg>
<svg style="left:869px;top:173.9px" width="6" height="7"><path d="M0.5 0V6.5L5.5 3.25z" fill="#8a8a8a"/></svg>
<svg style="left:877.5px;top:171.9px" width="11" height="11" viewBox="0 0 11 11"><path d="M5.5 0.5L10.3 2.8V8.2L5.5 10.5L0.7 8.2V2.8z" fill="#6cc4ec"/><path d="M0.7 2.8L5.5 5.1L10.3 2.8M5.5 5.1V10.5" fill="none" stroke="#2e4a5e" stroke-width="0.7"/></svg>
<div class="t" style="left:891.1px;top:171.4px;color:#7cacf0">VirtualItemWidget (3)</div>
<svg style="left:1037px;top:173.9px" width="5" height="8" viewBox="0 0 5 8"><path d="M0.8 0.8L4 4L0.8 7.2" fill="none" stroke="#b0b0b0" stroke-width="1"/></svg>
<div class="a" style="left:1045px;top:42px;width:2px;height:689px;background:#1a1a1a"></div>
<!-- ============ PROJECT ============ -->
<div class="a" style="left:1047px;top:42px;width:153px;height:689px;background:#383838"></div>
<div class="a" style="left:1047px;top:42px;width:153px;height:15px;background:#282828;border-radius:4px 0 0 0"></div>
<div class="a" style="left:1047px;top:42px;width:62px;height:15px;background:#3c3c3c;border-radius:4px 3px 0 0"></div>
<svg style="left:1053px;top:45.5px" width="10" height="8" viewBox="0 0 10 8"><path d="M0 0h3.5l1 1H10v7H0z" fill="#c8c8c8"/></svg>
<div class="t" style="left:1065.5px;top:44.5px">Project</div>
<svg style="left:1172px;top:45.5px" width="8" height="8" viewBox="0 0 8 8"><path d="M2 3.5V2.2a2 2 0 0 1 4 0" fill="none" stroke="#c4c4c4" stroke-width="1"/><rect x="0.8" y="3.8" width="6.4" height="3.7" fill="none" stroke="#c4c4c4" stroke-width="1"/></svg>
<svg style="left:1187.5px;top:45.5px" width="3" height="9"><circle cx="1.5" cy="1" r="0.95" fill="#c4c4c4"/><circle cx="1.5" cy="4" r="0.95" fill="#c4c4c4"/><circle cx="1.5" cy="7" r="0.95" fill="#c4c4c4"/></svg>
<div class="a" style="left:1047px;top:57px;width:153px;height:15.5px;background:#3c3c3c;border-bottom:1px solid #262626"></div>
<svg style="left:1051.5px;top:59.5px" width="11" height="11" viewBox="0 0 11 11"><path d="M5.5 0.5v10M0.5 5.5h10" stroke="#d4d4d4" stroke-width="1.5"/></svg>
<div class="arr" style="left:1064px;top:64px"></div>
<div class="a" style="left:1081px;top:59.5px;width:52px;height:11px;background:#2a2a2a;border:1px solid #232323;border-radius:3px"></div>
<svg style="left:1085px;top:62px" width="6" height="6" viewBox="0 0 6 6"><circle cx="2.3" cy="2.3" r="1.6" fill="none" stroke="#c0c0c0" stroke-width="1"/><path d="M3.4 3.4L5.5 5.5" stroke="#c0c0c0" stroke-width="1"/></svg>
<div class="a" style="left:1133px;top:58.5px;width:13px;height:13px;background:#303030;border-radius:0 3px 3px 0"></div>
<svg style="left:1134px;top:60px" width="11" height="10" viewBox="0 0 11 10"><rect x="3.5" y="0.5" width="7" height="6" rx="1" fill="none" stroke="#c8c8c8" stroke-width="0.9"/><circle cx="2.5" cy="7.5" r="1.8" fill="none" stroke="#c8c8c8" stroke-width="0.9"/><path d="M5 5l3.5-3M6.5 2h2v2" stroke="#c8c8c8" stroke-width="0.9" fill="none"/></svg>
<div class="a" style="left:1148px;top:57px;width:1px;height:15px;background:#2e2e2e"></div>
<svg style="left:1151.5px;top:59px" width="11" height="11" viewBox="0 0 11 11"><circle cx="3" cy="8" r="2.6" fill="#d0d0d0"/><rect x="0.8" y="0.8" width="4.5" height="4.5" fill="#d0d0d0"/><path d="M7.5 4.5l3 5.5h-6z" fill="#d0d0d0"/></svg>
<div class="a" style="left:1167px;top:57px;width:1px;height:15px;background:#2e2e2e"></div>
<svg style="left:1171.5px;top:59.5px" width="10" height="10" viewBox="0 0 10 10"><path d="M0.5 5.5L5 1h4.5v4.5L5 10z" fill="#d0d0d0"/><circle cx="7.3" cy="3" r="1" fill="#3c3c3c"/></svg>
<div class="a" style="left:1186px;top:57px;width:1px;height:15px;background:#2e2e2e"></div>
<svg style="left:1190px;top:61px" width="12" height="8" viewBox="0 0 12 8"><path d="M0.5 4q5.5-5 11 0q-5.5 5-11 0z" fill="#7a7a7a"/></svg>
<svg style="left:1050.5px;top:79px" width="8" height="6"><path d="M0.5 0.5h7L4 5.5z" fill="#8a8a8a"/></svg>
<svg style="left:1060px;top:77px" width="12" height="9" viewBox="0 0 12 9"><path d="M0.5 0.5h4l1 1.2h5v1.5H3l-2.5 5.5z" fill="#c8c8c8"/><path d="M3 3.7h8.5L9 8.7H0.5z" fill="#c8c8c8"/></svg>
<div class="t b" style="left:1073.8px;top:75.6px;color:#d4d4d4;font-size:9.5px">Assets</div>
<svg style="left:1071px;top:89.0px" width="9" height="11" viewBox="0 0 9 11"><path d="M0.5 0.5h5.5l2.5 2.5v7.5h-8z" fill="#e8e8e8"/></svg>
<div class="t" style="left:1083.6px;top:88.5px">csc</div>
<svg style="left:1062px;top:103.3px" width="6" height="7"><path d="M0.5 0V6.5L5.5 3.25z" fill="#8a8a8a"/></svg>
<svg style="left:1070.5px;top:102.3px" width="11" height="9" viewBox="0 0 11 9"><path d="M0 0.5h4l1 1.2h6V9H0z" fill="#c4c4c4"/></svg>
<div class="t" style="left:1083.6px;top:100.8px">DevTools</div>
<svg style="left:1062px;top:115.5px" width="6" height="7"><path d="M0.5 0V6.5L5.5 3.25z" fill="#8a8a8a"/></svg>
<svg style="left:1070.5px;top:114.5px" width="11" height="9" viewBox="0 0 11 9"><path d="M0 0.5h4l1 1.2h6V9H0z" fill="#c4c4c4"/></svg>
<div class="t" style="left:1083.6px;top:113px">Plugins</div>
<svg style="left:1062px;top:127.9px" width="6" height="7"><path d="M0.5 0V6.5L5.5 3.25z" fill="#8a8a8a"/></svg>
<svg style="left:1070.5px;top:126.9px" width="11" height="9" viewBox="0 0 11 9"><path d="M0 0.5h4l1 1.2h6V9H0z" fill="#c4c4c4"/></svg>
<div class="t" style="left:1083.6px;top:125.4px">Resources</div>
<svg style="left:1071px;top:138.1px" width="9" height="11" viewBox="0 0 9 11"><path d="M0.5 0.5h5.5l2.5 2.5v7.5h-8z" fill="#e8e8e8"/><path d="M3.5 2.8v5.8M5.5 2.8v5.8M2 4.5h5M2 6.8h5" stroke="#3b8a3b" stroke-width="0.9"/></svg>
<div class="t" style="left:1083.6px;top:137.6px">StoreController</div>
<svg style="left:1062px;top:152.6px" width="6" height="7"><path d="M0.5 0V6.5L5.5 3.25z" fill="#8a8a8a"/></svg>
<svg style="left:1070.5px;top:151.6px" width="11" height="9" viewBox="0 0 11 9"><path d="M0 0.5h4l1 1.2h6V9H0z" fill="#c4c4c4"/></svg>
<div class="t" style="left:1083.6px;top:150.1px">Tests</div>
<svg style="left:1071px;top:162.7px" width="9" height="11" viewBox="0 0 9 11"><path d="M0.5 0.5h5.5l2.5 2.5v7.5h-8z" fill="#e8e8e8"/><path d="M3.5 2.8v5.8M5.5 2.8v5.8M2 4.5h5M2 6.8h5" stroke="#3b8a3b" stroke-width="0.9"/></svg>
<div class="t" style="left:1083.6px;top:162.2px">VirtualItemWidget</div>
<svg style="left:1070px;top:175.0px" width="11" height="11" viewBox="0 0 11 11"><path d="M5.5 0.5L10.3 2.8V8.2L5.5 10.5L0.7 8.2V2.8z" fill="#6cc4ec"/><path d="M0.7 2.8L5.5 5.1L10.3 2.8M5.5 5.1V10.5" fill="none" stroke="#2e4a5e" stroke-width="0.7"/></svg>
<div class="t" style="left:1083.6px;top:174.5px">VirtualItemWidget</div>
<svg style="left:1062px;top:189.3px" width="6" height="7"><path d="M0.5 0V6.5L5.5 3.25z" fill="#8a8a8a"/></svg>
<svg style="left:1070.5px;top:188.3px" width="11" height="9" viewBox="0 0 11 9"><path d="M0 0.5h4l1 1.2h6V9H0z" fill="#c4c4c4"/></svg>
<div class="t" style="left:1083.6px;top:186.8px">Xsolla</div>
<svg style="left:1062px;top:201.7px" width="6" height="7"><path d="M0.5 0V6.5L5.5 3.25z" fill="#8a8a8a"/></svg>
<svg style="left:1070.5px;top:200.7px" width="11" height="9" viewBox="0 0 11 9"><path d="M0 0.5h4l1 1.2h6V9H0z" fill="#c4c4c4"/></svg>
<div class="t" style="left:1083.6px;top:199.2px">Xsolla.Demo</div>
<svg style="left:1051px;top:214.2px" width="6" height="7"><path d="M0.5 0V6.5L5.5 3.25z" fill="#8a8a8a"/></svg>
<svg style="left:1060px;top:213.2px" width="11" height="9" viewBox="0 0 11 9"><path d="M0 0.5h4l1 1.2h6V9H0z" fill="#c4c4c4"/></svg>
<div class="t b" style="left:1073.8px;top:211.7px;color:#d4d4d4;font-size:9.5px">Packages</div>
<div class="a" style="left:1199px;top:42px;width:1px;height:689px;background:#1e1e1e"></div>
</body></html>
